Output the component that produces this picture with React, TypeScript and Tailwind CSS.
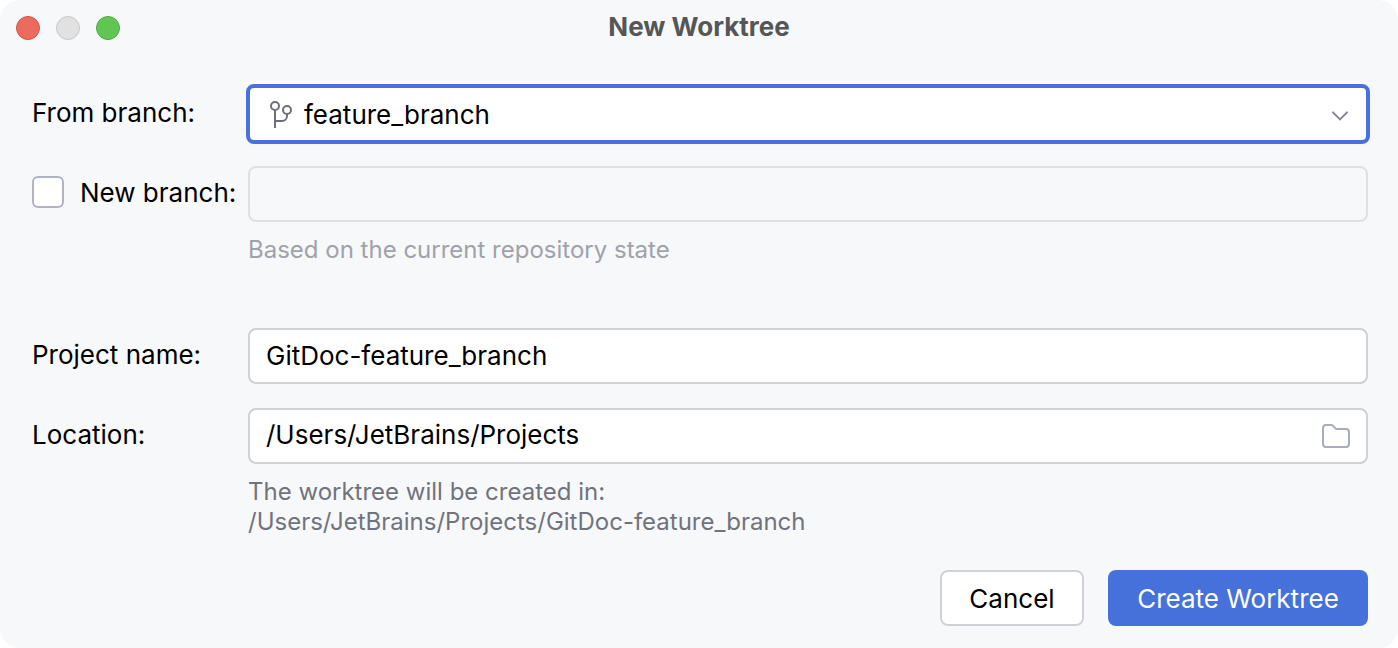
import type { ReactNode } from "react";

const BranchIcon = () => (
  <svg width="24" height="28" viewBox="0 0 24 28" fill="none" stroke="#6c707e" strokeWidth="2" aria-hidden="true">
    <circle cx="5" cy="6" r="4" />
    <circle cx="17" cy="10" r="4" />
    <path d="M5 10V28M5 21H12A5 5 0 0 0 17 16V14" />
  </svg>
);

const FolderIcon = () => (
  <svg width="32" height="32" viewBox="0 0 32 32" fill="none" stroke="#a8adbd" strokeWidth="2" aria-hidden="true">
    <path d="M3 8A3 3 0 0 1 6 5H11.2A2 2 0 0 1 12.7 5.6L15.4 8.4A2 2 0 0 0 16.9 9H26A3 3 0 0 1 29 12V24A3 3 0 0 1 26 27H6A3 3 0 0 1 3 24Z" />
  </svg>
);

const ChevronIcon = () => (
  <svg
    className="pointer-events-none absolute top-5 right-[18px]"
    width="24"
    height="24"
    viewBox="0 0 24 24"
    fill="none"
    stroke="#818594"
    strokeWidth="2"
    strokeLinecap="round"
    aria-hidden="true"
  >
    <path d="M5 8.4L12 15.4L19 8.4" />
  </svg>
);

const Label = ({ htmlFor, children }: { htmlFor: string; children: ReactNode }) => (
  <label htmlFor={htmlFor} className="w-54 shrink-0 pb-0.5">
    {children}
  </label>
);

const App = () => {
  return (
    <div className="min-h-screen bg-white font-['Inter',sans-serif] text-[26px] leading-8 text-black">
      <div className="flex min-h-screen flex-col rounded-[20px] bg-[#f7f8fa]">
        <header className="grid grid-cols-[1fr_auto_1fr] items-center px-4 pt-3">
          <div className="flex gap-4">
            <button aria-label="Close" className="size-6 rounded-full border border-[#d55448] bg-[#ed6a5e]" />
            <button aria-label="Minimize" className="size-6 rounded-full border border-[#c8c8c9] bg-[#e1e1e2]" />
            <button aria-label="Zoom" className="size-6 rounded-full border border-[#52a842] bg-[#61c554]" />
          </div>
          <h1 className="pb-0.5 leading-[30px] font-bold text-[#555657]">New Worktree</h1>
        </header>

        <form className="flex flex-1 flex-col pt-10 pr-[30px] pl-8" onSubmit={(e) => e.preventDefault()}>
          <div className="flex items-center">
            <Label htmlFor="from-branch">From branch:</Label>
            <div className="relative -mr-0.5 -ml-0.5 flex-1">
              <div className="pointer-events-none absolute top-4 left-6">
                <BranchIcon />
              </div>
              <select
                id="from-branch"
                className="block h-15 w-full appearance-none rounded-lg border-4 border-[#4671de] bg-white pt-0.5 pl-[54px] outline-none"
              >
                <option>feature_branch</option>
              </select>
              <ChevronIcon />
            </div>
          </div>

          <div className="mt-[22px] flex items-center">
            <div className="flex w-54 shrink-0 items-center gap-4 pb-1">
              <input
                id="new-branch"
                type="checkbox"
                className="size-8 shrink-0 appearance-none rounded-md border-2 border-[#b0b3c4] bg-white"
              />
              <label htmlFor="new-branch" className="pt-0.5 whitespace-nowrap">
                New branch:
              </label>
            </div>
            <input
              aria-label="New branch name"
              disabled
              className="h-14 min-w-0 flex-1 rounded-lg border-2 border-[#dfe0e3] bg-[#f7f8fa] px-4"
            />
          </div>
          <p className="mt-3 ml-54 text-[24px] text-[#a0a2aa]">Based on the current repository state</p>

          <div className="mt-[62px] flex items-center">
            <Label htmlFor="project-name">Project name:</Label>
            <input
              id="project-name"
              defaultValue="GitDoc-feature_branch"
              className="h-14 min-w-0 flex-1 rounded-lg border-2 border-[#d0d1d6] bg-white px-4 pb-0.5 outline-none"
            />
          </div>

          <div className="mt-6 flex items-center">
            <Label htmlFor="location">Location:</Label>
            <div className="flex h-14 flex-1 items-center rounded-lg border-2 border-[#d0d1d6] bg-white pr-3.5 pl-4">
              <input
                id="location"
                defaultValue="/Users/JetBrains/Projects"
                className="min-w-0 flex-1 bg-transparent pb-0.5 outline-none"
              />
              <button type="button" aria-label="Browse">
                <FolderIcon />
              </button>
            </div>
          </div>
          <p className="mt-[13px] ml-54 text-[24px] leading-[30px] text-[#71737c]">
            The worktree will be created in:
            <br />
            /Users/JetBrains/Projects/GitDoc-feature_branch
          </p>

          <div className="mt-auto flex justify-end gap-6 pb-[22px]">
            <button type="button" className="h-14 w-36 rounded-lg border-2 border-[#d0d1d6] bg-white pt-0.5">
              Cancel
            </button>
            <button type="submit" className="h-14 w-65 rounded-lg bg-[#4671da] pt-0.5 text-white">
              Create Worktree
            </button>
          </div>
        </form>
      </div>
    </div>
  );
};

export default App;
